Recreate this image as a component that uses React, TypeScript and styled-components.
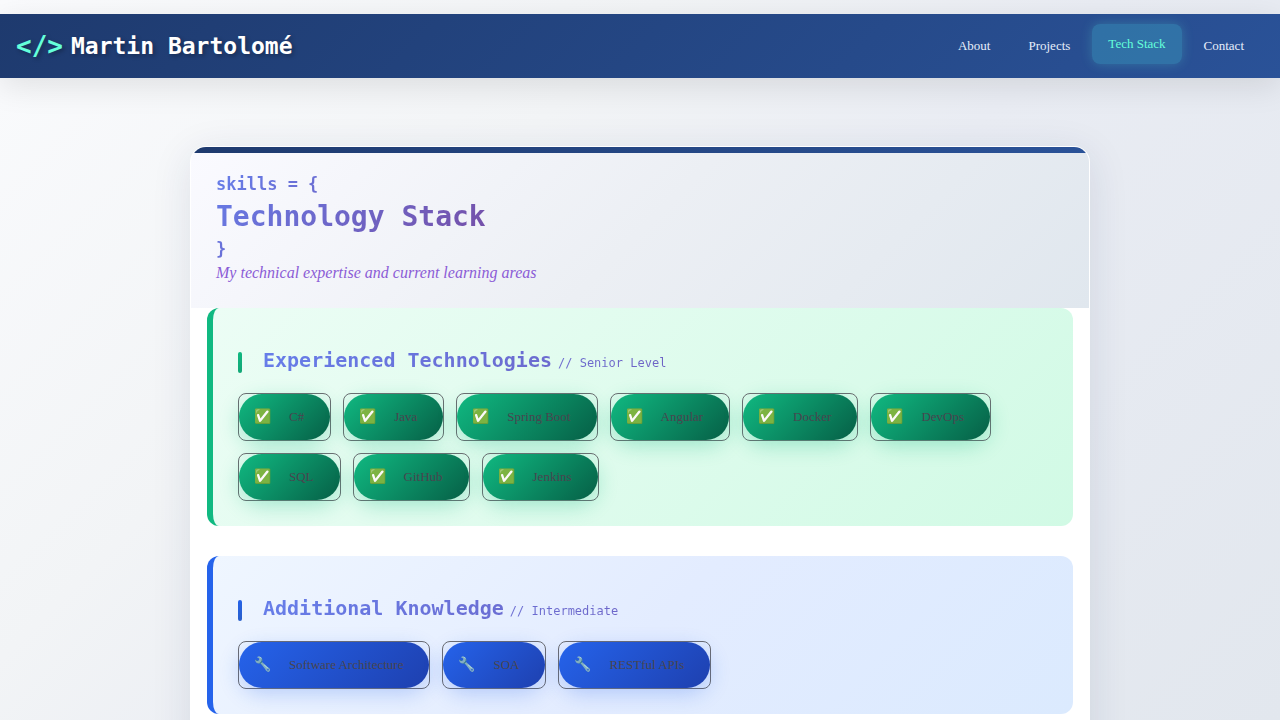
import React from 'react';
import styled, { createGlobalStyle, css } from 'styled-components';

const SERIF = '"Liberation Serif", "Times New Roman", serif';
const MONO = '"DejaVu Sans Mono", monospace';

const GlobalStyle = createGlobalStyle`
  *, *::before, *::after { box-sizing: border-box; }
  body {
    margin: 0;
    min-height: 100vh;
    font-family: ${SERIF};
    font-size: 14px;
    background: linear-gradient(135deg, #fafbfd 0%, #f2f4f6 33%, #e9ecf3 55%, #e2e7ee 100%) fixed;
  }
`;

const Page = styled.div`
  padding-top: 14px;
  min-height: 100vh;
  overflow: hidden;
`;

const TopBar = styled.header`
  display: flex;
  align-items: center;
  justify-content: space-between;
  height: 64px;
  padding: 0 20px 0 16px;
  background: linear-gradient(135deg, #1e3a6e 0%, #2a5298 100%);
  box-shadow: 0 8px 32px rgba(0, 0, 0, 0.1);
`;

const Brand = styled.a`
  display: flex;
  align-items: center;
  gap: 8px;
  color: #ffffff;
  font: bold 23px/32px ${MONO};
  text-decoration: none;
  text-shadow: 2px 2px 4px rgba(0, 0, 0, 0.3);
`;

const BrandMark = styled.span`
  color: #64ffda;
  font-size: 26px;
`;

const Nav = styled.nav`
  display: flex;
  align-items: center;
  gap: 6px;
`;

const NavLink = styled.a<{ $active?: boolean }>`
  padding: 12px 16px;
  border-radius: 8px;
  color: #e6eefa;
  font-size: 13px;
  line-height: 16px;
  text-decoration: none;
  ${({ $active }) =>
    $active &&
    css`
      color: #64ffda;
      background: rgba(64, 170, 200, 0.38);
      box-shadow: 0 0 12px rgba(100, 255, 218, 0.22);
      transform: translateY(-2px);
    `}
`;

const Card = styled.main`
  max-width: 900px;
  margin: 68px auto 40px;
  padding-bottom: 24px;
  border: 1px solid rgba(255, 255, 255, 0.8);
  border-radius: 16px;
  overflow: hidden;
  background: #ffffff;
  box-shadow: 0 8px 40px rgba(30, 50, 90, 0.11);
`;

const Accent = styled.div`
  height: 6px;
  background: linear-gradient(135deg, #1e3a6e 0%, #2a5298 100%);
`;

const Intro = styled.div`
  padding: 16px 25px 27px;
  background: linear-gradient(135deg, #fafaff 0%, #eceff4 50%, #e0e7ee 100%);
`;

const gradientText = css`
  background: linear-gradient(135deg, #667eea 0%, #764ba2 100%);
  background-clip: text;
  -webkit-background-clip: text;
  color: transparent;
`;

const Title = styled.h1`
  width: fit-content;
  margin: 0;
  font: bold 28px/34px ${MONO};
  ${gradientText}
`;

const Brace = styled.span`
  display: block;
  font-size: 17px;
  line-height: 31px;
`;

const Subtitle = styled.p`
  margin: 0;
  color: #8b5cd6;
  font-size: 16px;
  font-style: italic;
  line-height: 16px;
`;

type Tone = 'green' | 'blue';

const tones = {
  green: {
    edge: '#10b981',
    bar: 'linear-gradient(135deg, #10b981, #14a676)',
    panel: 'linear-gradient(135deg, #ecfdf5 0%, #d1fae5 100%)',
    chip: 'linear-gradient(135deg, #10b981 0%, #065f46 100%)',
    glow: 'rgba(16, 185, 129, 0.3)',
  },
  blue: {
    edge: '#2563eb',
    bar: 'linear-gradient(135deg, #2563eb, #2a5fc8)',
    panel: 'linear-gradient(135deg, #eff6ff 0%, #e3ecff 50%, #dbeafe 100%)',
    chip: 'linear-gradient(135deg, #2563eb 0%, #1e40af 100%)',
    glow: 'rgba(37, 99, 235, 0.25)',
  },
};

const Panel = styled.section<{ $tone: Tone }>`
  margin: 0 16px 30px;
  padding: 38px 25px 25px;
  border-left: 6px solid ${({ $tone }) => tones[$tone].edge};
  border-radius: 12px;
  background: ${({ $tone }) => tones[$tone].panel};
`;

const Heading = styled.div`
  display: flex;
  align-items: center;
  gap: 21px;
  margin-bottom: 19px;
`;

const HeadingBar = styled.span<{ $tone: Tone }>`
  width: 4px;
  height: 21px;
  margin-top: 5px;
  border-radius: 2px;
  background: ${({ $tone }) => tones[$tone].bar};
`;

const HeadingText = styled.h2`
  flex: 1;
  margin: 0;
  font: bold 20px/28px ${MONO};
  ${gradientText}
`;

const Level = styled.small`
  margin-left: 6px;
  font-size: 12px;
  font-weight: normal;
  line-height: 12px;
`;

const Chips = styled.ul`
  display: flex;
  flex-wrap: wrap;
  gap: 12px;
  margin: 0;
  padding: 0;
  list-style: none;
`;

const ChipFrame = styled.li`
  border: 1px solid #6b6b70;
  border-radius: 8px;
`;

const Chip = styled.div<{ $tone: Tone }>`
  display: flex;
  align-items: center;
  height: 46px;
  padding: 0 26px 0 15px;
  border-radius: 25px;
  color: #49454f;
  font-size: 13px;
  line-height: 16px;
  background: ${({ $tone }) => tones[$tone].chip};
  box-shadow: 0 6px 20px ${({ $tone }) => tones[$tone].glow};
`;

const ChipIcon = styled.span`
  width: 35px;
  font-size: 14px;
`;

const sections: { tone: Tone; title: string; level: string; icon: string; items: string[] }[] = [
  {
    tone: 'green',
    title: 'Experienced Technologies',
    level: '// Senior Level',
    icon: '✅',
    items: ['C#', 'Java', 'Spring Boot', 'Angular', 'Docker', 'DevOps', 'SQL', 'GitHub', 'Jenkins'],
  },
  {
    tone: 'blue',
    title: 'Additional Knowledge',
    level: '// Intermediate',
    icon: '🔧',
    items: ['Software Architecture', 'SOA', 'RESTful APIs'],
  },
];

const links = ['About', 'Projects', 'Tech Stack', 'Contact'];

export default function App() {
  return (
    <>
      <GlobalStyle />
      <Page>
        <TopBar>
          <Brand href="#home">
            <BrandMark>&lt;/&gt;</BrandMark>
            Martin Bartolomé
          </Brand>
          <Nav>
            {links.map((label) => (
              <NavLink
                key={label}
                href={'#' + label.toLowerCase().replace(' ', '-')}
                $active={label === 'Tech Stack'}
              >
                {label}
              </NavLink>
            ))}
          </Nav>
        </TopBar>
        <Card>
          <Accent />
          <Intro>
            <Title>
              <Brace>skills = &#123;</Brace>
              Technology Stack
              <Brace>&#125;</Brace>
            </Title>
            <Subtitle>My technical expertise and current learning areas</Subtitle>
          </Intro>
          {sections.map((s) => (
            <Panel key={s.title} $tone={s.tone}>
              <Heading>
                <HeadingBar $tone={s.tone} />
                <HeadingText>
                  {s.title}
                  <Level>{s.level}</Level>
                </HeadingText>
              </Heading>
              <Chips>
                {s.items.map((item) => (
                  <ChipFrame key={item}>
                    <Chip $tone={s.tone}>
                      <ChipIcon aria-hidden="true">{s.icon}</ChipIcon>
                      {item}
                    </Chip>
                  </ChipFrame>
                ))}
              </Chips>
            </Panel>
          ))}
        </Card>
      </Page>
    </>
  );
}
